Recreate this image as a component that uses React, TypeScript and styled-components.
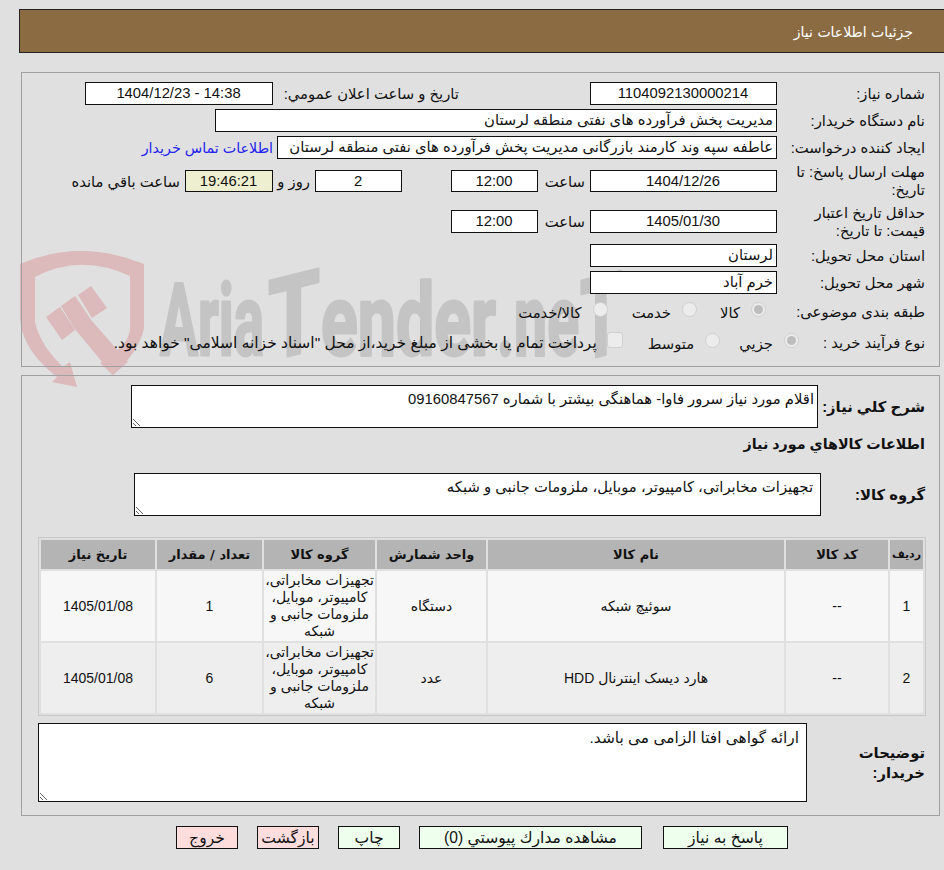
import styled, { createGlobalStyle } from "styled-components";

const GlobalStyle = createGlobalStyle`
  html, body {
    margin: 0;
    background: #e0e0e0;
  }
  body {
    font-family: "Liberation Sans", "DejaVu Sans", sans-serif;
    font-size: 14.8px;
    color: #111;
  }
`;

const items = [
  { row: 1, code: "--", name: "سوئیچ شبکه", unit: "دستگاه", count: 1, date: "1405/01/08" },
  { row: 2, code: "--", name: "هارد دیسک اینترنال HDD", unit: "عدد", count: 6, date: "1405/01/08" },
];

const Watermark = () => (
  <WatermarkSvg viewBox="0 0 630 150" width="630" height="150">
    <g fill="#dcb9ba">
      <path d="M20 19 Q80 -7 144 19 L144 83 Q140 105 113 130 L100 118 Q130 100 130 83 L130 31 Q80 8 35 32 L35 77 Q40 100 63 122 L70 117 L77 142 L52 137 L57 132 Q22 105 20 73 Z" />
      <polygon points="46,72 60,62 75,85 62,95" />
      <polygon points="61,61 75,51 92,76 128,117 113,130 74,83" />
      <polygon points="78,50 91,41 107,63 92,73" />
    </g>
    <g fill="#c4c4c4" stroke="#c4c4c4" strokeWidth="3" strokeLinejoin="round" fontFamily="Roboto, sans-serif" fontWeight="700" fontSize="100">
      <text x="160" y="110" textLength="104" lengthAdjust="spacingAndGlyphs">Aria</text>
      <text transform="translate(268 116) skewY(-14)" fontSize="112" textLength="52" lengthAdjust="spacingAndGlyphs">T</text>
      <text x="321" y="110" textLength="175" lengthAdjust="spacingAndGlyphs">ender</text>
      <text x="497" y="110" textLength="82" lengthAdjust="spacingAndGlyphs">.ne</text>
      <text transform="translate(580 116) skewY(-14)" fontSize="112" textLength="42" lengthAdjust="spacingAndGlyphs">T</text>
    </g>
  </WatermarkSvg>
);

export default function App() {
  return (
    <Page dir="rtl">
      <GlobalStyle />
      <Watermark />
      <Header>جزئیات اطلاعات نیاز</Header>

      <InfoPanel>
        <Row $h={23}>
          <Label>شماره نیاز:</Label>
          <Field $w={187} $center>1104092130000214</Field>
          <InlineText $mr={131} $w={181}>تاریخ و ساعت اعلان عمومي:</InlineText>
          <Field $w={188} $mr={5} $center>14:38 - 1404/12/23</Field>
        </Row>
        <Row $h={23}>
          <Label>نام دستگاه خریدار:</Label>
          <Field $w={562}>مدیریت پخش فرآورده های نفتی منطقه لرستان</Field>
        </Row>
        <Row $h={23}>
          <Label>ایجاد کننده درخواست:</Label>
          <Field $w={500}>عاطفه سپه وند کارمند بازرگانی مدیریت پخش فرآورده های نفتی منطقه لرستان</Field>
          <ContactLink href="#">اطلاعات تماس خریدار</ContactLink>
        </Row>
        <Row $h={36}>
          <Label>مهلت ارسال پاسخ: تا تاریخ:</Label>
          <Field $w={187} $h={22} $center>1404/12/26</Field>
          <InlineText $mr={5} $w={42}>ساعت</InlineText>
          <Field $w={87} $h={22} $mr={5} $center>12:00</Field>
          <Field $w={87} $h={22} $mr={49} $center>2</Field>
          <InlineText $mr={5} $w={28}>روز و</InlineText>
          <Field $w={88} $h={22} $mr={9} $center $bg="#eeeed0">19:46:21</Field>
          <InlineText $mr={5}>ساعت باقي مانده</InlineText>
        </Row>
        <Row $h={37}>
          <Label>حداقل تاریخ اعتبار قیمت: تا تاریخ:</Label>
          <Field $w={187} $center>1405/01/30</Field>
          <InlineText $mr={5} $w={42}>ساعت</InlineText>
          <Field $w={87} $mr={5} $center>12:00</Field>
        </Row>
        <Row $h={23}>
          <Label>استان محل تحویل:</Label>
          <Field $w={187}>لرستان</Field>
        </Row>
        <Row $h={23}>
          <Label>شهر محل تحویل:</Label>
          <Field $w={187}>خرم آباد</Field>
        </Row>
        <Row $h={28}>
          <Label>طبقه بندی موضوعی:</Label>
          <Options>
            <Radio type="radio" disabled defaultChecked $mr={11} />
            <span>كالا</span>
            <Radio type="radio" disabled $mr={23} />
            <span>خدمت</span>
            <Radio type="radio" disabled $mr={24} />
            <span>كالا/خدمت</span>
          </Options>
        </Row>
        <Row $h={26}>
          <Label>نوع فرآیند خرید :</Label>
          <Options>
            <Radio type="radio" disabled defaultChecked $mr={-22} />
            <span>جزيي</span>
            <Radio type="radio" disabled $mr={19} />
            <span>متوسط</span>
            <Check type="checkbox" disabled />
            <PaymentNote>پرداخت تمام یا بخشی از مبلغ خرید،از محل "اسناد خزانه اسلامی" خواهد بود.</PaymentNote>
          </Options>
        </Row>
      </InfoPanel>

      <DetailPanel>
        <TopRow>
          <StrongLabel>شرح کلي نیاز:</StrongLabel>
          <Note readOnly defaultValue="اقلام مورد نیاز سرور فاوا- هماهنگی بیشتر با شماره 09160847567" />
        </TopRow>
        <Heading>اطلاعات کالاهاي مورد نیاز</Heading>
        <GroupRow>
          <GroupLabel>گروه کالا:</GroupLabel>
          <GroupNote readOnly defaultValue="تجهیزات مخابراتی، کامپیوتر، موبایل، ملزومات جانبی و شبکه" />
        </GroupRow>

        <ItemsTable>
          <colgroup>
            <col width="33" />
            <col width="102" />
            <col width="296" />
            <col width="109" />
            <col width="111" />
            <col width="105" />
            <col width="114" />
          </colgroup>
          <thead>
            <tr>
              <th>ردیف</th>
              <th>کد کالا</th>
              <th>نام کالا</th>
              <th>واحد شمارش</th>
              <th>گروه کالا</th>
              <th>تعداد / مقدار</th>
              <th>تاریخ نیاز</th>
            </tr>
          </thead>
          <tbody>
            {items.map((item) => (
              <ItemRow key={item.row} $alt={item.row % 2 === 0}>
                <td>{item.row}</td>
                <td>{item.code}</td>
                <td>{item.name}</td>
                <td>{item.unit}</td>
                <td>تجهیزات مخابراتی، کامپیوتر، موبایل، ملزومات جانبی و شبکه</td>
                <td>{item.count}</td>
                <td>{item.date}</td>
              </ItemRow>
            ))}
          </tbody>
        </ItemsTable>

        <BuyerRow>
          <BuyerLabel>توضیحات خریدار:</BuyerLabel>
          <BuyerNote readOnly defaultValue="ارائه گواهی افتا الزامی می باشد." />
        </BuyerRow>
      </DetailPanel>

      <Actions>
        <ActionButton $w={125}>پاسخ به نیاز</ActionButton>
        <ActionButton $w={223}>مشاهده مدارك پيوستي (0)</ActionButton>
        <ActionButton $w={62}>چاپ</ActionButton>
        <ActionButton $w={62} $danger>بازگشت</ActionButton>
        <ActionButton $w={62} $danger>خروج</ActionButton>
      </Actions>
    </Page>
  );
}

const Page = styled.div`
  position: relative;
  width: 944px;
  height: 870px;
  overflow: hidden;
  padding-top: 9px;
  box-sizing: border-box;
`;

const WatermarkSvg = styled.svg`
  position: absolute;
  left: 0;
  top: 245px;
  direction: ltr;
`;

const Header = styled.div`
  position: relative;
  height: 44px;
  margin-left: 19px;
  padding-right: 31px;
  background: #8b6b42;
  border: 1px solid #222;
  border-right: none;
  color: #fff;
  font-family: "DejaVu Sans", sans-serif;
  font-size: 14px;
  line-height: 44px;
  box-sizing: border-box;
`;

const Panel = styled.section`
  position: relative;
  margin-left: 21px;
  margin-right: 4px;
  border: 1px solid #a0a0a0;
  box-sizing: border-box;
`;

const InfoPanel = styled(Panel)`
  display: flex;
  flex-direction: column;
  gap: 4px;
  height: 295px;
  margin-top: 19px;
  padding-top: 9px;
`;

const DetailPanel = styled(Panel)`
  height: 441px;
  margin-top: 8px;
  padding-top: 9px;
`;

const Row = styled.div<{ $h: number }>`
  display: flex;
  align-items: center;
  height: ${(p) => p.$h}px;
`;

const Label = styled.div`
  flex: none;
  width: 148px;
  padding: 0 14px 0 0;
  line-height: 18px;
`;

const Field = styled.div<{ $w: number; $h?: number; $mr?: number; $center?: boolean; $bg?: string }>`
  flex: none;
  width: ${(p) => p.$w}px;
  height: ${(p) => p.$h ?? 23}px;
  margin-right: ${(p) => p.$mr ?? 0}px;
  padding: 0 3px 0 2px;
  box-sizing: border-box;
  overflow: hidden;
  white-space: nowrap;
  background: ${(p) => p.$bg ?? "#fff"};
  border: 1px solid #111;
  line-height: 21px;
  text-align: ${(p) => (p.$center ? "center" : "right")};
`;

const InlineText = styled.span<{ $mr?: number; $w?: number }>`
  flex: none;
  width: ${(p) => (p.$w ? `${p.$w}px` : "auto")};
  margin-right: ${(p) => p.$mr ?? 0}px;
  white-space: nowrap;
`;

const ContactLink = styled.a`
  margin-right: 4px;
  color: #2222ee;
  font-size: 14.3px;
  text-decoration: none;
  white-space: nowrap;
`;

const Options = styled.div`
  display: flex;
  align-items: center;
  white-space: nowrap;
`;

const PaymentNote = styled.span`
  font-size: 15.5px;
`;

const Radio = styled.input<{ $mr?: number }>`
  appearance: none;
  position: relative;
  flex: none;
  width: 15px;
  height: 15px;
  margin: 0 ${(p) => p.$mr ?? 0}px 5px 11px;
  border: 1px solid #cfcfcf;
  border-radius: 50%;
  background: #ececec;

  &:checked::after {
    content: "";
    position: absolute;
    inset: 2px;
    border-radius: 50%;
    background: #bdbdbd;
  }
`;

const Check = styled.input`
  appearance: none;
  flex: none;
  width: 16px;
  height: 16px;
  margin: 0 25px 6px 10px;
  border: 1px solid #cfcfcf;
  border-radius: 3px;
  background: #ececec;
`;

const TopRow = styled.div`
  display: flex;
  height: 43px;
`;

const StrongLabel = styled.div`
  flex: none;
  width: 107px;
  padding-right: 14px;
  align-self: center;
  font-weight: 700;
`;

const GroupLabel = styled(StrongLabel)`
  width: 104px;
`;

const Note = styled.textarea`
  flex: none;
  width: 687px;
  height: 43px;
  margin: 0;
  padding: 4px 3px;
  box-sizing: border-box;
  background: #fff;
  border: 1px solid #111;
  font: inherit;
  color: #111;
  outline: none;
`;

const Heading = styled.h3`
  margin: 0 14px 0 0;
  height: 32px;
  font-size: 14.3px;
  line-height: 32px;
  font-weight: 700;
`;

const GroupRow = styled.div`
  display: flex;
  height: 43px;
  margin-top: 13px;
`;

const GroupNote = styled(Note)`
  padding: 4px 7px;
`;

const ItemsTable = styled.table`
  width: 888px;
  margin: 21px 13px 0 0;
  table-layout: fixed;
  border-collapse: separate;
  border-spacing: 2px;
  border: 1px solid #c8c8c8;
  text-align: center;

  th {
    height: 29px;
    padding: 0;
    background: #b4b4b4;
    font-family: "DejaVu Sans", sans-serif;
    font-size: 13px;
    font-weight: 700;
    white-space: nowrap;
  }
  th:first-child {
    font-size: 11px;
  }
  td {
    height: 70px;
    padding: 0;
    font-size: 14px;
    line-height: 17px;
  }
`;

const ItemRow = styled.tr<{ $alt: boolean }>`
  background: ${(p) => (p.$alt ? "#eeeeee" : "#f7f7f7")};
`;

const BuyerRow = styled.div`
  display: flex;
  justify-content: space-between;
  height: 79px;
  margin-top: 7px;
  padding-left: 16px;
`;

const BuyerLabel = styled(StrongLabel)`
  width: 70px;
  line-height: 20px;
`;

const BuyerNote = styled(Note)`
  width: 769px;
  height: 79px;
  padding: 5px 7px;
  font-size: 15.4px;
`;

const Actions = styled.div`
  display: flex;
  gap: 19px;
  margin-top: 10px;
  padding-right: 156px;
`;

const ActionButton = styled.button<{ $w: number; $danger?: boolean }>`
  width: ${(p) => p.$w}px;
  height: 23px;
  padding: 0;
  background: ${(p) => (p.$danger ? "#ffdddd" : "#eeffee")};
  border: 1px solid #111;
  font: inherit;
  font-size: 15.6px;
  color: #111;

  &:first-child {
    margin-left: 2px;
  }
`;
